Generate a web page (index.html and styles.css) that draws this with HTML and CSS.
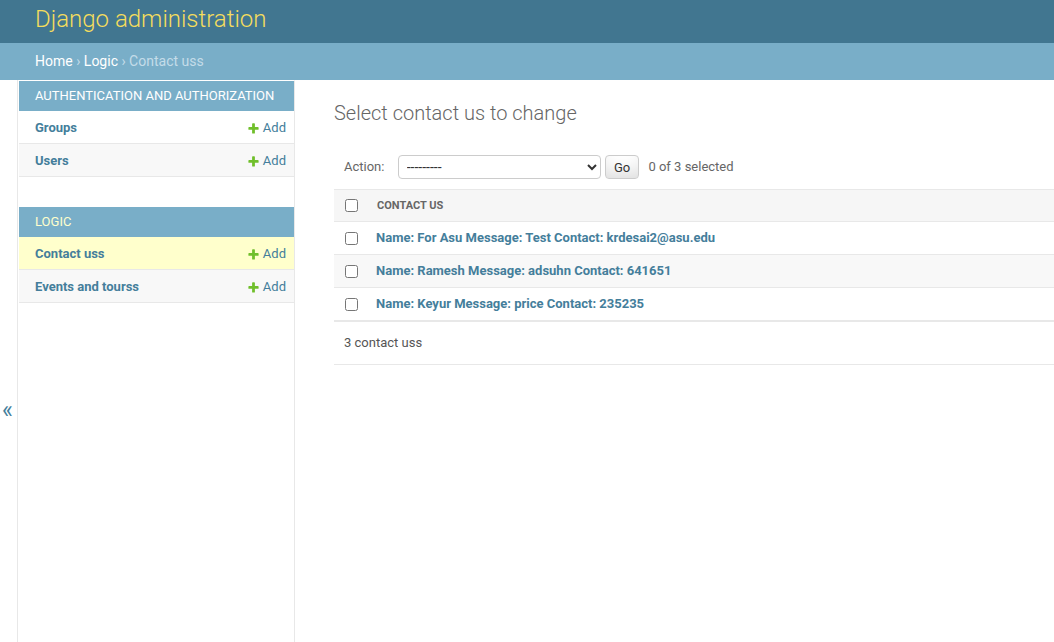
FILE: index.html
```html
<!DOCTYPE html>
<html lang="en">
<head>
<meta charset="utf-8">
<title>Select contact us to change | Django site admin</title>
<link rel="stylesheet" href="styles.css">
</head>
<body>
<div class="container">
  <header class="header">
    <h1 class="branding"><a href="#">Django administration</a></h1>
  </header>
  <nav class="breadcrumbs">
    <a href="#">Home</a> › <a href="#">Logic</a> › Contact uss
  </nav>
  <div class="main">
    <button class="toggle-nav" type="button" aria-label="Toggle navigation"><span class="toggle-glyph">«</span></button>
    <nav class="sidebar">
      <div class="module">
        <div class="module-caption"><a href="#" class="section">Authentication and Authorization</a></div>
        <div class="module-row">
          <a href="#" class="model-link">Groups</a>
          <a href="#" class="addlink"><svg class="plus" width="13" height="13" viewBox="0 0 1792 1792"><path fill="#70bf2b" d="M1600 796v192q0 40-28 68t-68 28h-416v416q0 40-28 68t-68 28h-192q-40 0-68-28t-28-68v-416h-416q-40 0-68-28t-28-68v-192q0-40 28-68t68-28h416v-416q0-40 28-68t68-28h192q40 0 68 28t28 68v416h416q40 0 68 28t28 68z"/></svg>Add</a>
        </div>
        <div class="module-row row2">
          <a href="#" class="model-link">Users</a>
          <a href="#" class="addlink"><svg class="plus" width="13" height="13" viewBox="0 0 1792 1792"><path fill="#70bf2b" d="M1600 796v192q0 40-28 68t-68 28h-416v416q0 40-28 68t-68 28h-192q-40 0-68-28t-28-68v-416h-416q-40 0-68-28t-28-68v-192q0-40 28-68t68-28h416v-416q0-40 28-68t68-28h192q40 0 68 28t28 68v416h416q40 0 68 28t28 68z"/></svg>Add</a>
        </div>
      </div>
      <div class="module current-app">
        <div class="module-caption"><a href="#" class="section">Logic</a></div>
        <div class="module-row current-model">
          <a href="#" class="model-link">Contact uss</a>
          <a href="#" class="addlink"><svg class="plus" width="13" height="13" viewBox="0 0 1792 1792"><path fill="#70bf2b" d="M1600 796v192q0 40-28 68t-68 28h-416v416q0 40-28 68t-68 28h-192q-40 0-68-28t-28-68v-416h-416q-40 0-68-28t-28-68v-192q0-40 28-68t68-28h416v-416q0-40 28-68t68-28h192q40 0 68 28t28 68v416h416q40 0 68 28t28 68z"/></svg>Add</a>
        </div>
        <div class="module-row row2">
          <a href="#" class="model-link">Events and tourss</a>
          <a href="#" class="addlink"><svg class="plus" width="13" height="13" viewBox="0 0 1792 1792"><path fill="#70bf2b" d="M1600 796v192q0 40-28 68t-68 28h-416v416q0 40-28 68t-68 28h-192q-40 0-68-28t-28-68v-416h-416q-40 0-68-28t-28-68v-192q0-40 28-68t68-28h416v-416q0-40 28-68t68-28h192q40 0 68 28t28 68v416h416q40 0 68 28t28 68z"/></svg>Add</a>
        </div>
      </div>
    </nav>
    <div class="content">
      <h1 class="page-title">Select contact us to change</h1>
      <div class="actions">
        <label>Action: <select class="action-select"><option>---------</option><option>Delete selected contact uss</option></select></label>
        <button type="button" class="go-button">Go</button>
        <span class="action-counter">0 of 3 selected</span>
      </div>
      <table class="results">
        <thead>
          <tr>
            <th class="check-col"><input type="checkbox" class="cb"></th>
            <th class="col-head"><span class="head-text">Contact us</span></th>
          </tr>
        </thead>
        <tbody>
          <tr>
            <td class="check-col"><input type="checkbox" class="cb"></td>
            <th class="field"><a href="#">Name: For Asu Message: Test Contact: krdesai2@asu.edu</a></th>
          </tr>
          <tr>
            <td class="check-col"><input type="checkbox" class="cb"></td>
            <th class="field"><a href="#">Name: Ramesh Message: adsuhn Contact: 641651</a></th>
          </tr>
          <tr>
            <td class="check-col"><input type="checkbox" class="cb"></td>
            <th class="field"><a href="#">Name: Keyur Message: price Contact: 235235</a></th>
          </tr>
        </tbody>
      </table>
      <p class="paginator">3 contact uss</p>
    </div>
  </div>
</div>
</body>
</html>
```

FILE: styles.css
```css
* { box-sizing: border-box; }

html, body {
  margin: 0;
  padding: 0;
}

body {
  font-family: Roboto, "Liberation Sans", Arial, sans-serif;
  font-size: 14px;
  color: #333;
  background: #fff;
  overflow: hidden;
}

a {
  color: #447e9b;
  text-decoration: none;
}

.header {
  background: #417690;
  height: 43px;
  padding: 5px 35px 0;
}

.branding {
  margin: 0;
  font-size: 24px;
  font-weight: 300;
  line-height: 28px;
}

.branding a {
  color: #f5dd5d;
}

.breadcrumbs {
  background: #79aec8;
  color: #c4dce8;
  height: 37px;
  padding: 10px 35px;
  font-size: 14px;
  line-height: 17px;
}

.breadcrumbs a {
  color: #fff;
}

.main {
  display: flex;
  min-height: calc(100vh - 80px);
}

.toggle-nav {
  flex: 0 0 18px;
  width: 18px;
  border: 0;
  border-right: 1px solid #e8e8e8;
  background: #fff;
  color: #447e9b;
  font-family: inherit;
  font-size: 23px;
  line-height: 26px;
  padding: 318px 2px 0 0;
  margin: 0;
  display: flex;
  justify-content: center;
  align-items: flex-start;
}

.sidebar {
  flex: 0 0 277px;
  border-top: 1px solid transparent;
  border-right: 1px solid #e8e8e8;
  padding-left: 1px;
}

.module {
  margin-bottom: 30px;
}

.module-caption {
  background: #79aec8;
  font-size: 13px;
  line-height: 16px;
  letter-spacing: 0;
  text-transform: uppercase;
  white-space: nowrap;
  padding: 7px 8px 7px 16px;
}

.module-caption .section {
  color: #fff;
}

.current-app .module-caption .section {
  color: #ffc;
}

.module-row {
  display: flex;
  justify-content: space-between;
  align-items: center;
  padding: 9px 8px 7px 16px;
  border-bottom: 1px solid #e8e8e8;
  font-size: 13px;
  line-height: 16px;
}

.row2 {
  background: #f8f8f8;
}

.current-model {
  background: #ffc;
}

.model-link {
  font-weight: 700;
}

.addlink {
  display: inline-flex;
  align-items: center;
}

.plus {
  margin-right: 3px;
  flex: 0 0 13px;
}

.content {
  flex: 1;
  min-width: 0;
  padding: 21px 0 20px 39px;
}

.page-title {
  margin: 0 0 20px;
  font-size: 20px;
  font-weight: 300;
  line-height: 24px;
  color: #666;
}

.actions {
  padding: 10px;
  height: 44px;
  line-height: 24px;
  font-size: 13px;
  color: #666;
  white-space: nowrap;
}

.action-select {
  vertical-align: top;
  width: 203px;
  height: 24px;
  margin: 0 0 0 10px;
  padding: 0 0 0 4px;
  border: 1px solid #ccc;
  border-radius: 4px;
  background: #fff;
  color: #333;
  font-family: inherit;
  font-size: 14px;
}

.go-button {
  vertical-align: top;
  height: 24px;
  margin: 0 0 0 1px;
  padding: 4px 8px;
  border: 1px solid #ccc;
  border-radius: 4px;
  background: #fff;
  box-shadow: 0 -15px 20px -10px rgba(0, 0, 0, 0.15) inset;
  color: #333;
  font-family: inherit;
  font-size: 13px;
  line-height: 1;
}

.action-counter {
  margin: 0 6px;
}

.results {
  width: 100%;
  border-collapse: collapse;
  font-size: 13px;
}

.results thead th {
  background: #f6f6f6;
  border-top: 1px solid #e8e8e8;
  border-bottom: 1px solid #e8e8e8;
  padding: 0;
  vertical-align: middle;
  text-align: left;
}

.head-text {
  display: block;
  padding: 8px 8px 8px 9px;
  font-size: 11px;
  line-height: 15px;
  font-weight: 700;
  color: #666;
  text-transform: uppercase;
}

.results .check-col {
  width: 34px;
  padding: 0;
  text-align: center;
  vertical-align: middle;
}

.cb {
  display: block;
  width: 13px;
  height: 13px;
  margin: 0 auto;
}

.results tbody td,
.results tbody th {
  border-bottom: 1px solid #e8e8e8;
  line-height: 16px;
}

.results tbody th.field {
  padding: 8px;
  text-align: left;
  font-weight: 700;
  vertical-align: top;
}

.results tbody tr:nth-child(even) {
  background: #f8f8f8;
}

.paginator {
  margin: 0;
  padding: 10px;
  border-top: 1px solid #e8e8e8;
  border-bottom: 1px solid #e8e8e8;
  font-size: 13px;
  line-height: 22px;
  color: #555;
}
```
